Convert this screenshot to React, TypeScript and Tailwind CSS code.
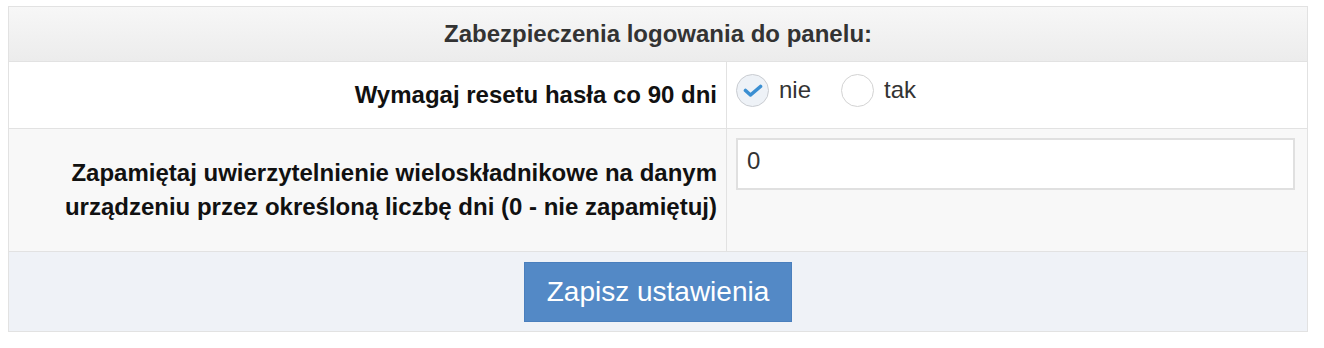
import { useState } from 'react';

function Radio({ checked, label, onClick }: { checked: boolean; label: string; onClick: () => void }) {
  return (
    <label className="flex items-center gap-[10px] cursor-pointer" onClick={onClick}>
      <span
        className={
          checked
            ? 'w-[33px] h-[33px] rounded-full border border-[#c9ccd1] bg-[#eef2f7] flex items-center justify-center'
            : 'w-[33px] h-[33px] rounded-full border border-[#d3d3d3] bg-white'
        }
      >
        {checked && (
          <svg width="20" height="14" viewBox="0 0 20 14" className="mt-[2px]">
            <path d="M2.5 6.5 L7.5 11 L17.5 2.5" fill="none" stroke="#3b8fd2" strokeWidth="3.6" strokeLinecap="round" strokeLinejoin="round" />
          </svg>
        )}
      </span>
      <span className="text-[24px] text-[#333]">{label}</span>
    </label>
  );
}

export default function App() {
  const [reset, setReset] = useState('nie');
  const [days, setDays] = useState('0');

  return (
    <div className="pt-[6px] pl-[8px] pr-[16px] font-['Liberation_Sans',Arial,sans-serif]">
      <div className="w-[1300px] border border-[#e2e2e2]">
        {/* header */}
        <div className="h-[55px] flex items-center justify-center bg-gradient-to-b from-[#f7f7f7] to-[#ececec] border-b border-[#e2e2e2]">
          <h3 className="text-[24px] font-bold text-[#333]">Zabezpieczenia logowania do panelu:</h3>
        </div>

        {/* row 1 */}
        <div className="grid grid-cols-[718px_1fr] border-b border-[#e2e2e2] bg-white h-[67px]">
          <div className="flex items-center justify-end pr-[9px] border-r border-[#e2e2e2]">
            <span className="text-[24px] font-bold text-[#111]">Wymagaj resetu hasła co 90 dni</span>
          </div>
          <div className="flex items-start pt-[10px] pl-[9px] gap-[30px]">
            <Radio checked={reset === 'nie'} label="nie" onClick={() => setReset('nie')} />
            <Radio checked={reset === 'tak'} label="tak" onClick={() => setReset('tak')} />
          </div>
        </div>

        {/* row 2 */}
        <div className="grid grid-cols-[718px_1fr] border-b border-[#e2e2e2] bg-[#f8f8f8] h-[123px]">
          <div className="flex items-center justify-end pr-[9px] border-r border-[#e2e2e2]">
            <p className="text-[24px] font-bold text-[#111] text-right leading-[34px]">
              Zapamiętaj uwierzytelnienie wieloskładnikowe na danym
              <br />
              urządzeniu przez określoną liczbę dni (0 - nie zapamiętuj)
            </p>
          </div>
          <div className="pt-[9px] pl-[9px] pr-[12px]">
            <input
              value={days}
              onChange={(e) => setDays(e.target.value)}
              className="w-full h-[52px] border-2 border-[#e0e0e0] bg-white px-[9px] pb-[6px] text-[24px] text-[#333] outline-none"
            />
          </div>
        </div>

        {/* footer */}
        <div className="h-[79px] bg-[#eff2f7] flex items-center justify-center">
          <button className="w-[268px] h-[60px] bg-[#5389c6] border border-[#4a7fbd] text-white text-[28px]">
            Zapisz ustawienia
          </button>
        </div>
      </div>
    </div>
  );
}
